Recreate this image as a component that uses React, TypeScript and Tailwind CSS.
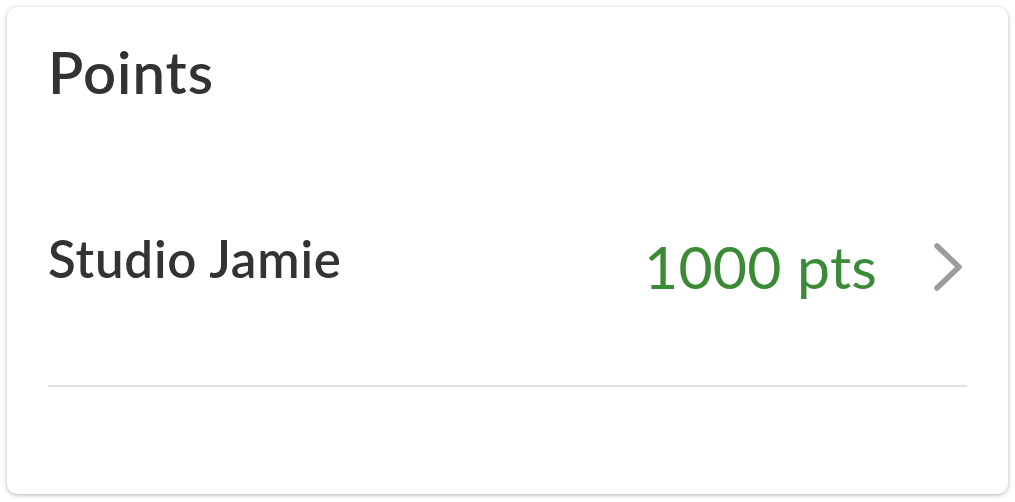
export default function App() {
  return (
    <div className="w-[1015px] h-[502px] bg-white pt-[7px] px-[7px]">
      <div className="h-[487px] rounded-[10px] bg-white shadow-[0_1px_4px_rgba(0,0,0,0.3)] px-[41px] pt-[36px] font-['Lato',sans-serif]">
        <h1 className="text-[58px] leading-none font-semibold tracking-[1px] text-[#333333]">Points</h1>

        <div className="mt-[132px] flex items-start justify-between pr-[4px]">
          <div className="text-[51px] leading-none font-semibold tracking-[0.8px] text-[#333333]">Studio Jamie</div>
          <div className="flex items-center gap-[56px] mt-[4px]">
            <span className="text-[59px] leading-none tracking-[0.2px] text-[#3b8a36]">1000 pts</span>
            <svg width="30" height="50" viewBox="0 0 30 50" fill="none">
              <path d="M4 4 L26 25 L4 46" stroke="#9c9c9c" strokeWidth="5.5" strokeLinecap="round" strokeLinejoin="round" />
            </svg>
          </div>
        </div>

        <div className="mt-[89px] h-[2px] bg-[#e2e2e2]" />
      </div>
    </div>
  )
}
